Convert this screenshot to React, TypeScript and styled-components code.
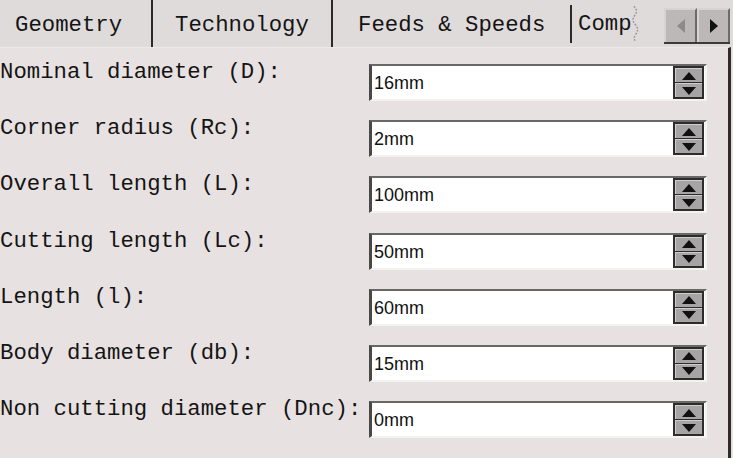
import React from "react";
import styled, { createGlobalStyle } from "styled-components";

const GlobalStyle = createGlobalStyle`
  html, body { margin: 0; padding: 0; background: #e4dddd; }
  #root { width: 733px; height: 458px; }
`;

const Page = styled.div`
  width: 733px;
  height: 458px;
  overflow: hidden;
  background: #e6dfdf;
  font-family: "Liberation Mono", "DejaVu Sans Mono", monospace;
  color: #141414;
  display: flex;
  flex-direction: column;
`;

const TabBar = styled.div`
  height: 47px;
  flex: none;
  display: flex;
  align-items: stretch;
  background: #e0dbdb;
`;

const Tab = styled.div<{ $w: number; $pl: number; $sep?: boolean }>`
  width: ${(p) => p.$w}px;
  padding-left: ${(p) => p.$pl}px;
  padding-top: 2px;
  box-sizing: border-box;
  display: flex;
  align-items: center;
  font-size: 22.3px;
  line-height: 22px;
  white-space: nowrap;
  overflow: hidden;
  border-right: ${(p) => (p.$sep ? "2px solid #2a2a2a" : "none")};
`;

const ClipTab = styled.div`
  width: 70px;
  padding-left: 6px;
  box-sizing: border-box;
  display: flex;
  align-items: center;
  font-size: 22.3px;
  white-space: nowrap;
  margin-top: 5px;
  margin-bottom: 4px;
  border-left: 2px solid #2a2a2a;
  margin-left: -2px;
`;

const ClipText = styled.span`
  width: 56px;
  overflow: hidden;
`;

const Scrollers = styled.div`
  margin-left: auto;
  margin-right: 3px;
  margin-top: 8px;
  height: 36px;
  display: flex;
  border-bottom: 2px solid #3a3a3a;
  box-sizing: border-box;
`;

const ScrollBtn = styled.div`
  width: 33px;
  height: 34px;
  box-sizing: border-box;
  background: #bcb8b8;
  border-top: 2px solid #d6d3d3;
  border-left: 2px solid #d6d3d3;
  border-right: 2px solid #6c6a6a;
  display: flex;
  align-items: center;
  justify-content: center;
`;

const Content = styled.div`
  flex: 1;
  display: grid;
  grid-template-columns: 369px 338px;
  grid-auto-rows: 56.2px;
  align-content: start;
  padding-top: 16px;
  border-right: 3px solid #2e2c2c;
  border-top: 1px solid #eee9e9;
  margin-right: 2px;
  box-sizing: border-box;
  background: #e7e1e1;
`;

const Label = styled.div`
  font-size: 22.3px;
  line-height: 22px;
  white-space: nowrap;
  margin-top: -3px;
`;

const Field = styled.div`
  height: 37px;
  box-sizing: border-box;
  background: #ffffff;
  border-top: 2px solid #6a6767;
  border-left: 3px solid #4a4747;
  border-bottom: 2px solid #f4f1f1;
  border-right: 2px solid #f4f1f1;
  display: flex;
  align-items: center;
  padding-left: 2px;
  font-family: "Liberation Sans", Arial, sans-serif;
  font-size: 18px;
  line-height: 18px;
  color: #111;
`;

const Value = styled.span`
  flex: 1;
  padding-top: 1px;
`;

const Spinner = styled.div`
  width: 31px;
  height: 33px;
  box-sizing: border-box;
  border: 2px solid #2c2c2c;
  background: #2c2c2c;
  display: flex;
  flex-direction: column;
  gap: 1px;
  margin-right: 1px;
`;

const SpinHalf = styled.div`
  flex: 1;
  background: #a6a4a4;
  border-top: 1px solid #d0cdcd;
  border-left: 1px solid #d0cdcd;
  display: flex;
  align-items: center;
  justify-content: center;
`;

const rows: [string, string][] = [
  ["Nominal diameter (D):", "16mm"],
  ["Corner radius (Rc):", "2mm"],
  ["Overall length (L):", "100mm"],
  ["Cutting length (Lc):", "50mm"],
  ["Length (l):", "60mm"],
  ["Body diameter (db):", "15mm"],
  ["Non cutting diameter (Dnc):", "0mm"],
];

const Up = () => (
  <svg width="14" height="8" viewBox="0 0 14 8">
    <polygon points="7,0 14,8 0,8" fill="#111" />
  </svg>
);
const Down = () => (
  <svg width="14" height="8" viewBox="0 0 14 8">
    <polygon points="0,0 14,0 7,8" fill="#111" />
  </svg>
);

export default function App() {
  return (
    <>
      <GlobalStyle />
      <Page>
        <TabBar>
          <Tab $w={153} $pl={15} $sep>
            Geometry
          </Tab>
          <Tab $w={180} $pl={22} $sep>
            Technology
          </Tab>
          <Tab $w={239} $pl={25}>
            Feeds &amp; Speeds
          </Tab>
          <ClipTab>
            <ClipText>Comp</ClipText>
            <svg width="10" height="38" viewBox="0 0 10 38">
              <path
                d="M3 0 Q8 5 4 10 Q0 15 5 20 Q9 25 5 30 Q2 34 5 38"
                stroke="#9a9696"
                strokeWidth="1.5"
                fill="none"
                strokeDasharray="2 1.5"
              />
            </svg>
          </ClipTab>
          <Scrollers>
            <ScrollBtn>
              <svg width="8" height="14" viewBox="0 0 8 14">
                <polygon points="8,0 8,14 0,7" fill="#8c8a8a" />
              </svg>
            </ScrollBtn>
            <ScrollBtn>
              <svg width="8" height="14" viewBox="0 0 8 14">
                <polygon points="0,0 8,7 0,14" fill="#111" />
              </svg>
            </ScrollBtn>
          </Scrollers>
        </TabBar>
        <Content>
          {rows.map(([label, value]) => (
            <React.Fragment key={label}>
              <Label>{label}</Label>
              <Field>
                <Value>{value}</Value>
                <Spinner>
                  <SpinHalf>
                    <Up />
                  </SpinHalf>
                  <SpinHalf>
                    <Down />
                  </SpinHalf>
                </Spinner>
              </Field>
            </React.Fragment>
          ))}
        </Content>
      </Page>
    </>
  );
}
